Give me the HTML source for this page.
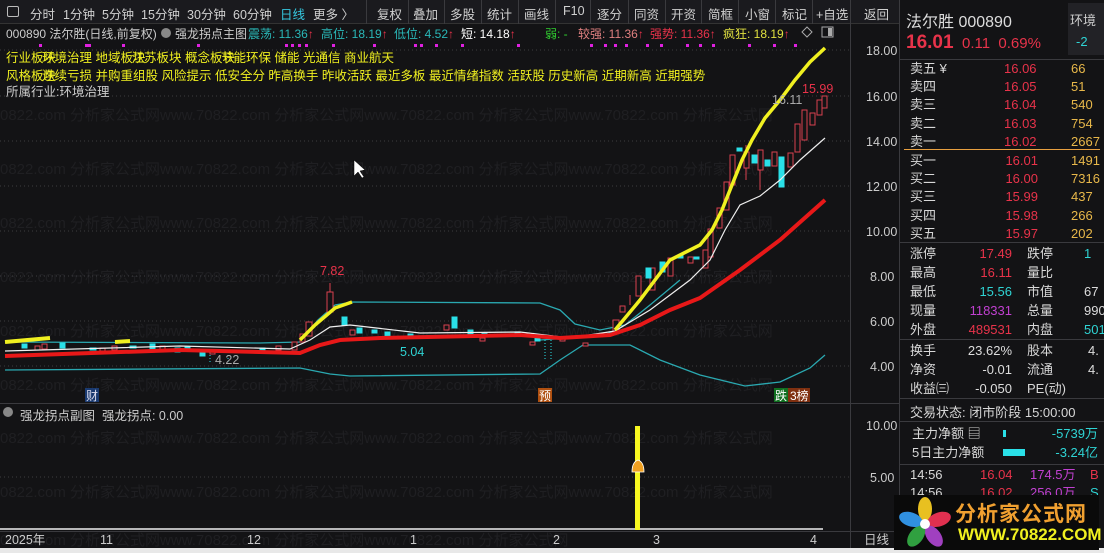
<!DOCTYPE html>
<html><head><meta charset="utf-8">
<style>
*{margin:0;padding:0;box-sizing:border-box}
body{width:1104px;height:553px;background:#131315;overflow:hidden;position:relative;font-family:"Liberation Sans","Noto Sans CJK SC",sans-serif;font-size:12px;color:#ccc}
.a{position:absolute;white-space:nowrap}
.tb{position:absolute;top:0;height:24px;left:0;width:900px;background:#1a1a1e;border-bottom:1px solid #333}
.tb span{position:absolute;top:4px;font-size:12.5px;color:#d0d0d0}
.sep{position:absolute;top:0;width:1px;height:24px;background:#3a3a3e}
.r{position:absolute;left:900px;width:204px}
.lb{color:#d8d8d8;font-size:13px}
.red{color:#e8334a}.cy{color:#2fd4d4}.yl{color:#e8b84a}.mg{color:#c040d0}.wh{color:#ddd}
.hd{position:absolute;top:25px;font-size:12px;white-space:nowrap}
</style></head><body>
<div class="tb">
<div style="position:absolute;left:7px;top:6px;width:12px;height:11px;border:1.5px solid #bbb;border-radius:2px"></div>
<span style="left:30px">分时</span><span style="left:63px">1分钟</span><span style="left:102px">5分钟</span><span style="left:141px">15分钟</span><span style="left:187px">30分钟</span><span style="left:233px">60分钟</span><span style="left:280px;color:#36c8e0">日线</span><span style="left:313px">更多 〉</span>
<div class="sep" style="left:366px"></div><span style="left:377px">复权</span>
<div class="sep" style="left:408px"></div><span style="left:413px">叠加</span>
<div class="sep" style="left:444px"></div><span style="left:450px">多股</span>
<div class="sep" style="left:481px"></div><span style="left:487px">统计</span>
<div class="sep" style="left:518px"></div><span style="left:524px">画线</span>
<div class="sep" style="left:555px"></div><span style="left:563px">F10</span>
<div class="sep" style="left:590px"></div><span style="left:597px">逐分</span>
<div class="sep" style="left:628px"></div><span style="left:634px">同资</span>
<div class="sep" style="left:665px"></div><span style="left:671px">开资</span>
<div class="sep" style="left:701px"></div><span style="left:708px">简框</span>
<div class="sep" style="left:738px"></div><span style="left:745px">小窗</span>
<div class="sep" style="left:775px"></div><span style="left:782px">标记</span>
<div class="sep" style="left:812px"></div><span style="left:816px">+自选</span>
<div class="sep" style="left:850px"></div><span style="left:864px">返回</span>
</div>
<div class="a" style="left:899px;top:0;width:1px;height:553px;background:#3a3a3e"></div>
<div class="a" style="left:850px;top:24px;width:1px;height:525px;background:#3a3a3e"></div>
<div class="a" style="left:0;top:403px;width:900px;height:1px;background:#3a3a3e"></div>
<div class="a" style="left:0;top:531px;width:900px;height:1px;background:#3a3a3e"></div>
<div class="a" style="left:0;top:548px;width:1104px;height:5px;background:#e8e8e8"></div>

<svg class="a" style="left:0;top:0" width="900" height="553">
<g fill="#1f1f22" font-size="15" font-family="Liberation Sans,Noto Sans CJK SC,sans-serif">
<text x="0" y="120">0822.com 分析家公式网www.70822.com 分析家公式网www.70822.com 分析家公式网www.70822.com 分析家公式网</text>
<text x="0" y="174">0822.com 分析家公式网www.70822.com 分析家公式网www.70822.com 分析家公式网www.70822.com 分析家公式网</text>
<text x="0" y="228">0822.com 分析家公式网www.70822.com 分析家公式网www.70822.com 分析家公式网www.70822.com 分析家公式网</text>
<text x="0" y="282">0822.com 分析家公式网www.70822.com 分析家公式网www.70822.com 分析家公式网www.70822.com 分析家公式网</text>
<text x="0" y="336">0822.com 分析家公式网www.70822.com 分析家公式网www.70822.com 分析家公式网www.70822.com 分析家公式网</text>
<text x="0" y="390">0822.com 分析家公式网www.70822.com 分析家公式网www.70822.com 分析家公式网www.70822.com 分析家公式网</text>
<text x="0" y="443">0822.com 分析家公式网www.70822.com 分析家公式网www.70822.com 分析家公式网www.70822.com 分析家公式网</text>
<text x="0" y="497">0822.com 分析家公式网www.70822.com 分析家公式网www.70822.com 分析家公式网www.70822.com 分析家公式网</text>
<text x="0" y="545">0822.com 分析家公式网www.70822.com 分析家公式网www.70822.com 分析家公式网</text>
</g>
<g stroke="#3c3c40" stroke-dasharray="1,3">
<line x1="0" y1="50" x2="850" y2="50"/><line x1="0" y1="96" x2="850" y2="96"/><line x1="0" y1="141" x2="850" y2="141"/><line x1="0" y1="186" x2="850" y2="186"/><line x1="0" y1="231" x2="850" y2="231"/><line x1="0" y1="276" x2="850" y2="276"/><line x1="0" y1="321" x2="850" y2="321"/><line x1="0" y1="366" x2="850" y2="366"/><line x1="0" y1="477" x2="850" y2="477"/>
</g>
<g fill="#ccc" font-size="12.5">
<text x="866" y="55">18.00</text><text x="866" y="101">16.00</text><text x="866" y="146">14.00</text><text x="866" y="191">12.00</text><text x="866" y="236">10.00</text><text x="870" y="281">8.00</text><text x="870" y="326">6.00</text><text x="870" y="371">4.00</text>
<text x="866" y="430">10.00</text><text x="870" y="482">5.00</text>
<text x="5" y="544">2025年</text><text x="100" y="544">11</text><text x="247" y="544">12</text><text x="410" y="544">1</text><text x="553" y="544">2</text><text x="653" y="544">3</text><text x="810" y="544">4</text><text x="864" y="544">日线</text>
</g>
<g fill="#e020e0">
<rect x="39" y="44" width="3" height="3"/><rect x="85" y="44" width="3" height="3"/><rect x="88" y="44" width="3" height="3"/><rect x="122" y="44" width="3" height="3"/><rect x="197" y="44" width="3" height="3"/><rect x="285" y="44" width="3" height="3"/><rect x="291" y="44" width="3" height="3"/><rect x="298" y="44" width="3" height="3"/><rect x="305" y="44" width="3" height="3"/><rect x="332" y="44" width="3" height="3"/><rect x="373" y="44" width="3" height="3"/><rect x="414" y="44" width="3" height="3"/><rect x="420" y="44" width="3" height="3"/><rect x="435" y="44" width="3" height="3"/><rect x="461" y="44" width="3" height="3"/><rect x="517" y="44" width="3" height="3"/><rect x="590" y="44" width="3" height="3"/><rect x="604" y="44" width="3" height="3"/><rect x="614" y="44" width="3" height="3"/><rect x="625" y="44" width="3" height="3"/><rect x="646" y="44" width="3" height="3"/><rect x="660" y="44" width="3" height="3"/><rect x="686" y="44" width="3" height="3"/><rect x="699" y="44" width="3" height="3"/><rect x="712" y="44" width="3" height="3"/><rect x="748" y="44" width="3" height="3"/><rect x="773" y="44" width="3" height="3"/><rect x="794" y="44" width="3" height="3"/>
</g>
<g fill="none" stroke="#2aa8b0" stroke-width="1.3">
<path d="M5,342 L260,343 L300,342 L318,320 L335,305 L352,302 L540,303 L560,310 L575,324 L600,330 L625,325 L650,305 L680,280"/>
<path d="M5,370 L300,368 L330,374 L350,376 L540,374 L560,360 L583,345 L630,345 L660,360 L700,375 L745,386 L780,382 L810,368 L825,355"/>
<path d="M540,340 L600,336 L620,330"/>
</g>
<g stroke="#d84050" fill="#131315" stroke-width="1">
<rect x="35" y="346" width="5" height="4"/><rect x="42" y="344" width="5" height="5"/><rect x="100" y="348" width="5" height="3"/><rect x="112" y="346" width="5" height="4"/><rect x="160" y="346" width="5" height="4"/><rect x="185" y="348" width="5" height="3"/><rect x="210" y="351" width="5" height="3"/><rect x="276" y="346" width="5" height="4"/><rect x="292" y="342" width="5" height="8"/>
<line x1="330" y1="283" x2="330" y2="300"/><rect x="327" y="292" width="6" height="20"/><rect x="306" y="322" width="6" height="14"/><rect x="300" y="334" width="5" height="8"/><rect x="350" y="330" width="5" height="5"/><rect x="444" y="325" width="5" height="5"/><rect x="480" y="338" width="5" height="3"/><rect x="530" y="342" width="5" height="3"/><rect x="560" y="338" width="5" height="3"/><rect x="583" y="343" width="5" height="3"/><rect x="613" y="320" width="6" height="12"/>
<rect x="620" y="306" width="5" height="6"/><line x1="630" y1="295" x2="630" y2="305"/><rect x="636" y="276" width="5" height="20"/><rect x="650" y="268" width="5" height="22"/><rect x="668" y="258" width="5" height="18"/><rect x="688" y="257" width="5" height="6"/><rect x="703" y="250" width="5" height="18"/><rect x="708" y="229" width="5" height="28"/><rect x="717" y="208" width="5" height="20"/><rect x="724" y="182" width="5" height="28"/><rect x="730" y="155" width="5" height="30"/>
<line x1="746" y1="145" x2="746" y2="180"/><rect x="744" y="152" width="5" height="16"/><rect x="758" y="150" width="5" height="20"/><line x1="760" y1="170" x2="760" y2="190"/><rect x="772" y="152" width="5" height="14"/><rect x="788" y="153" width="5" height="14"/><rect x="795" y="124" width="5" height="28"/><rect x="802" y="110" width="5" height="30"/><rect x="810" y="113" width="5" height="12"/><rect x="817" y="100" width="5" height="15"/><rect x="822" y="96" width="5" height="12"/>
</g>
<g fill="#2ae0e8" stroke="#2ae0e8">
<rect x="22" y="344" width="5" height="4"/><rect x="60" y="343" width="5" height="5"/><rect x="90" y="348" width="6" height="2"/><rect x="130" y="346" width="6" height="2"/><rect x="150" y="344" width="5" height="5"/><rect x="175" y="348" width="5" height="4"/><rect x="200" y="352" width="5" height="4"/><rect x="185" y="347" width="5" height="2"/><rect x="260" y="348" width="5" height="2"/>
<rect x="342" y="317" width="5" height="8"/><rect x="357" y="328" width="5" height="5"/><rect x="372" y="330" width="5" height="3"/><rect x="385" y="332" width="5" height="4"/><rect x="408" y="334" width="5" height="3"/><rect x="452" y="317" width="5" height="11"/><rect x="468" y="330" width="5" height="4"/><rect x="482" y="333" width="5" height="2"/><rect x="515" y="333" width="5" height="2"/><rect x="535" y="338" width="5" height="3"/>
<rect x="646" y="268" width="5" height="10"/><rect x="660" y="262" width="5" height="10"/><rect x="678" y="255" width="5" height="3"/><rect x="694" y="257" width="5" height="2"/><rect x="737" y="148" width="5" height="3"/><rect x="752" y="155" width="5" height="8"/><rect x="765" y="160" width="5" height="6"/><rect x="779" y="157" width="5" height="30"/>
</g>
<g stroke="#2ae0e8" stroke-dasharray="1,2"><line x1="545" y1="340" x2="545" y2="360"/><line x1="551" y1="340" x2="551" y2="360"/><line x1="210" y1="352" x2="210" y2="362"/><line x1="228" y1="352" x2="228" y2="362"/></g>
<path d="M5,351 L180,346 L290,349 L310,340 L330,327 L350,325 L420,333 L520,332 L570,338 L615,331 L650,310 L690,280 L710,260 L725,230 L740,205 L760,196 L780,180 L800,160 L825,138" fill="none" stroke="#eee" stroke-width="1.2"/>
<path d="M5,356 L180,350 L300,353 L320,345 L340,340 L380,338 L520,335 L560,338 L610,335 L640,325 L670,310 L700,298 L740,270 L780,240 L825,200" fill="none" stroke="#e81818" stroke-width="4"/>
<path d="M5,342 L50,338" fill="none" stroke="#f0f020" stroke-width="4"/><path d="M115,342 L130,341" fill="none" stroke="#f0f020" stroke-width="4"/>
<path d="M300,340 L315,325 L335,308 L352,302" fill="none" stroke="#f0f020" stroke-width="3.5"/>
<path d="M615,330 L640,300 L670,260 L700,245 L712,230 L722,210 L732,185 L742,160 L752,140 L765,118 L780,100 L795,80 L810,62 L825,48" fill="none" stroke="#f0f020" stroke-width="3.5"/>
<g font-size="12.5"><text x="320" y="275" fill="#e8334a">7.82</text><text x="400" y="356" fill="#2fd4d4">5.04</text><text x="215" y="364" fill="#aaa">4.22</text><text x="772" y="104" fill="#aaa">16.11</text><text x="802" y="93" fill="#e8334a">15.99</text></g>
<line x1="0" y1="529" x2="823" y2="529" stroke="#eee" stroke-width="1.5"/>
<rect x="635" y="426" width="5" height="104" fill="#f8f820"/>
<path d="M632,472 Q632,462 638,460 Q644,462 644,472 Z" fill="#f0a020" stroke="#fff" stroke-width="0.8"/>
<rect x="85" y="388" width="14" height="14" fill="#1a3a70"/><text x="86" y="400" fill="#dde" font-size="12">财</text>
<rect x="538" y="388" width="14" height="14" fill="#b05010"/><text x="539" y="400" fill="#fff" font-size="12">预</text>
<rect x="774" y="388" width="14" height="14" fill="#107020"/><text x="775" y="400" fill="#fff" font-size="12">跌</text>
<rect x="788" y="388" width="22" height="14" fill="#803010"/><text x="790" y="400" fill="#fff" font-size="12">3榜</text>
<path d="M354,160 L354,176 L358,172 L362,178 L364,177 L360,171 L365,170 Z" fill="#fff" stroke="#000" stroke-width="0.5"/>
<circle cx="8" cy="412" r="5" fill="#888"/><circle cx="166" cy="33" r="5" fill="#888"/>
<path d="M807,27 L812,32 L807,37 L802,32 Z" fill="none" stroke="#aaa"/><rect x="822" y="27" width="11" height="10" fill="none" stroke="#aaa"/><rect x="828" y="28" width="4" height="8" fill="#aaa"/>
</svg>
<div class="hd" style="left:6px;color:#ccc">000890 法尔胜(日线,前复权)</div>
<div class="hd" style="left:175px;color:#ccc">强龙拐点主图</div>
<div class="hd" style="left:248px;color:#2ab8b8">震荡: 11.36<span class="red">↑</span></div>
<div class="hd" style="left:321px;color:#2ab8b8">高位: 18.19<span class="red">↑</span></div>
<div class="hd" style="left:394px;color:#2ab8b8">低位: 4.52<span class="red">↑</span></div>
<div class="hd" style="left:461px;color:#fff">短: 14.18<span class="red">↑</span></div>
<div class="hd" style="left:545px;color:#30d030">弱: -</div>
<div class="hd" style="left:578px;color:#e08080">较强: 11.36<span class="red">↑</span></div>
<div class="hd" style="left:650px;color:#e8334a">强势: 11.36↑</div>
<div class="hd" style="left:723px;color:#e0e040">疯狂: 18.19<span class="red">↑</span></div>
<div class="a" style="left:6px;top:47px;color:#f0f020;font-size:12.5px">行业板块<span style="margin-left:-14px">环境治理</span> 地域板块<span style="margin-left:-14px">江苏板块</span> 概念板块<span style="margin-left:-14px">节能环保</span> 储能 光通信 商业航天</div>
<div class="a" style="left:6px;top:65px;color:#f0f020;font-size:12.5px">风格板块<span style="margin-left:-14px">连续亏损</span> 并购重组股 风险提示 低安全分 昨高换手 昨收活跃 最近多板 最近情绪指数 活跃股 历史新高 近期新高 近期强势</div>
<div class="a" style="left:6px;top:81px;color:#ccc;font-size:12.5px">所属行业:环境治理</div>
<div class="a" style="left:20px;top:405px;color:#ccc;font-size:12.5px">强龙拐点副图 &nbsp;强龙拐点: 0.00</div>

<div class="r" style="top:0;height:60px;background:#131315"></div>
<div class="a" style="left:906px;top:8px;font-size:16px;color:#ddd">法尔胜 000890</div>
<div class="a" style="left:1068px;top:3px;width:36px;height:52px;background:#222226"></div>
<div class="a" style="left:1070px;top:10px;color:#ccc;font-size:13px">环境</div>
<div class="a" style="left:1076px;top:34px;color:#2fd4d4;font-size:13px">-2</div>
<div class="a" style="left:906px;top:32px;font-size:19px;font-weight:bold;color:#e8334a">16.01</div>
<div class="a" style="left:962px;top:35px;font-size:15px;color:#e8334a">0.11 &nbsp;0.69%</div>
<div class="a" style="left:900px;top:59px;width:204px;height:1px;background:#3a3a3e"></div>
<div class="a lb" style="left:910px;top:60px;line-height:18.2px">卖五 ¥<br>卖四<br>卖三<br>卖二<br>卖一</div>
<div class="a red" style="left:1004px;top:60px;line-height:18.2px;font-size:13px">16.06<br>16.05<br>16.04<br>16.03<br>16.02</div>
<div class="a yl" style="left:1071px;top:60px;line-height:18.2px;font-size:13px">66<br>51<br>540<br>754<br>2667</div>
<div class="a" style="left:904px;top:149px;width:196px;height:1px;background:#e8a040"></div>
<div class="a lb" style="left:910px;top:152px;line-height:18.2px">买一<br>买二<br>买三<br>买四<br>买五</div>
<div class="a red" style="left:978px;top:152px;line-height:18.2px;font-size:13px;width:60px;text-align:right">16.01<br>16.00<br>15.99<br>15.98<br>15.97</div>
<div class="a yl" style="left:1071px;top:152px;line-height:18.2px;font-size:13px">1491<br>7316<br>437<br>266<br>202</div>
<div class="a" style="left:900px;top:242px;width:204px;height:1px;background:#3a3a3e"></div>
<div class="a lb" style="left:910px;top:244px;line-height:19px">涨停<br>最高<br>最低<br>现量<br>外盘</div>
<div class="a" style="left:960px;top:244px;line-height:19px;font-size:13px;width:52px;text-align:right"><span class="red">17.49</span><br><span class="red">16.11</span><br><span class="cy">15.56</span><br><span class="mg">118331</span><br><span class="red">489531</span></div>
<div class="a lb" style="left:1027px;top:244px;line-height:19px">跌停<br>量比<br>市值<br>总量<br>内盘</div>
<div class="a" style="left:1084px;top:244px;line-height:19px;font-size:13px"><span class="cy">1</span><br>&nbsp;<br><span class="wh">67</span><br><span class="wh">990</span><br><span class="cy">501</span></div>
<div class="a" style="left:900px;top:339px;width:204px;height:1px;background:#3a3a3e"></div>
<div class="a lb" style="left:910px;top:341px;line-height:19px">换手<br>净资<br>收益㈢</div>
<div class="a wh" style="left:955px;top:341px;line-height:19px;font-size:13px;width:57px;text-align:right">23.62%<br>-0.01<br>-0.050</div>
<div class="a lb" style="left:1027px;top:341px;line-height:19px">股本<br>流通<br>PE(动)</div>
<div class="a wh" style="left:1088px;top:341px;line-height:19px;font-size:13px">4.<br>4.</div>
<div class="a" style="left:900px;top:398px;width:204px;height:1px;background:#3a3a3e"></div>
<div class="a lb" style="left:910px;top:402px">交易状态: 闭市阶段 15:00:00</div>
<div class="a" style="left:900px;top:421px;width:204px;height:1px;background:#3a3a3e"></div>
<div class="a lb" style="left:912px;top:424px;line-height:19px">主力净额 ▤<br>5日主力净额</div>
<div class="a" style="left:1003px;top:430px;width:3px;height:7px;background:#2ae0e8"></div>
<div class="a" style="left:1003px;top:449px;width:22px;height:7px;background:#2ae0e8"></div>
<div class="a cy" style="left:1040px;top:424px;line-height:19px;font-size:13px;width:58px;text-align:right">-5739万<br>-3.24亿</div>
<div class="a" style="left:900px;top:464px;width:204px;height:1px;background:#3a3a3e"></div>
<div class="a lb" style="left:910px;top:466px;line-height:18px">14:56<br>14:56</div>
<div class="a red" style="left:980px;top:466px;line-height:18px;font-size:13px">16.04<br>16.02</div>
<div class="a mg" style="left:1030px;top:466px;line-height:18px;font-size:13px">174.5万<br>256.0万</div>
<div class="a" style="left:1090px;top:466px;line-height:18px;font-size:13px"><span class="red">B</span><br><span class="cy">S</span></div>
<div class="a" style="left:894px;top:495px;width:205px;height:55px;background:#0a0a0a"></div>
<svg class="a" style="left:895px;top:497px" width="60" height="54">
<ellipse cx="30" cy="12" rx="7" ry="12" fill="#e8c020"/>
<ellipse cx="30" cy="12" rx="7" ry="12" fill="#e03050" transform="rotate(72 30 27)"/>
<ellipse cx="30" cy="12" rx="7" ry="12" fill="#a040c0" transform="rotate(144 30 27)"/>
<ellipse cx="30" cy="12" rx="7" ry="12" fill="#30a040" transform="rotate(216 30 27)"/>
<ellipse cx="30" cy="12" rx="7" ry="12" fill="#3090e0" transform="rotate(288 30 27)"/>
<circle cx="30" cy="27" r="5" fill="#fff"/>
</svg>
<div class="a" style="left:955px;top:498px;font-size:21px;font-weight:bold;color:#f0a030;letter-spacing:1px">分析家公式网</div>
<div class="a" style="left:958px;top:525px;font-size:17px;font-weight:bold;color:#f0f020">WWW.70822.COM</div>
</body></html>
